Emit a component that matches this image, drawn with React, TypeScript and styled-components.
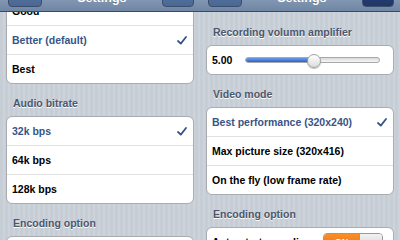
import styled, { createGlobalStyle } from "styled-components";

const GlobalStyle = createGlobalStyle`
  html, body {
    margin: 0;
    padding: 0;
    background: #c5ccd4;
  }
  body {
    font-family: "Liberation Sans", Helvetica, Arial, sans-serif;
  }
`;

type RowData = { label: string; checked?: boolean };

const qualityRows: RowData[] = [
  { label: "Good" },
  { label: "Better (default)", checked: true },
  { label: "Best" },
];

const bitrateRows: RowData[] = [
  { label: "32k bps", checked: true },
  { label: "64k bps" },
  { label: "128k bps" },
];

const videoRows: RowData[] = [
  { label: "Best performance (320x240)", checked: true },
  { label: "Max picture size (320x416)" },
  { label: "On the fly (low frame rate)" },
];

const Check = () => (
  <svg width="10" height="9" viewBox="0 0 10 9">
    <path
      d="M1 5 L3.8 7.6 L9 1"
      fill="none"
      stroke="#385487"
      strokeWidth="1.8"
      strokeLinecap="round"
      strokeLinejoin="round"
    />
  </svg>
);

const App = () => {
  return (
    <Screen>
      <GlobalStyle />

      <Panel>
        <NavBar>
          <NavButton>About</NavButton>
          <NavTitle>Settings</NavTitle>
          <NavButton>Done</NavButton>
        </NavBar>
        <Content offset={-16}>
          <Card>
            {qualityRows.map((r) => (
              <Row key={r.label}>
                <RowLabel selected={r.checked}>{r.label}</RowLabel>
                {r.checked && <Check />}
              </Row>
            ))}
          </Card>
          <GroupHeader>Audio bitrate</GroupHeader>
          <Card>
            {bitrateRows.map((r) => (
              <Row key={r.label}>
                <RowLabel selected={r.checked}>{r.label}</RowLabel>
                {r.checked && <Check />}
              </Row>
            ))}
          </Card>
          <GroupHeader>Encoding option</GroupHeader>
          <Card>
            <Row>
              <RowLabel>Auto-start encoding</RowLabel>
            </Row>
          </Card>
        </Content>
      </Panel>

      <Panel>
        <NavBar>
          <NavButton>About</NavButton>
          <NavTitle>Settings</NavTitle>
          <NavButton pressed>Done</NavButton>
        </NavBar>
        <Content offset={0}>
          <GroupHeader first>Recording volumn amplifier</GroupHeader>
          <Card>
            <Row>
              <RowLabel>5.00</RowLabel>
              <Track>
                <TrackFill style={{ width: "50%" }} />
                <Thumb style={{ left: "50%" }} />
              </Track>
            </Row>
          </Card>
          <GroupHeader>Video mode</GroupHeader>
          <Card>
            {videoRows.map((r) => (
              <Row key={r.label}>
                <RowLabel selected={r.checked}>{r.label}</RowLabel>
                {r.checked && <Check />}
              </Row>
            ))}
          </Card>
          <GroupHeader>Encoding option</GroupHeader>
          <Card>
            <Row toggle>
              <RowLabel>Auto-start encoding</RowLabel>
              <Toggle>
                <ToggleOn>ON</ToggleOn>
                <ToggleKnob />
              </Toggle>
            </Row>
          </Card>
        </Content>
      </Panel>
    </Screen>
  );
};

const Screen = styled.div`
  display: flex;
  width: 400px;
  height: 240px;
  overflow: hidden;
`;

const Panel = styled.div`
  width: 200px;
  height: 240px;
  overflow: hidden;
  display: flex;
  flex-direction: column;
  background: repeating-linear-gradient(
    90deg,
    #c6cdd5 0px,
    #c6cdd5 3px,
    #cdd3da 3px,
    #cdd3da 5px
  );
`;

const NavBar = styled.div`
  position: relative;
  z-index: 1;
  flex: none;
  height: 11px;
  padding: 0 6px 0 8px;
  display: flex;
  align-items: flex-end;
  justify-content: space-between;
  overflow: hidden;
  background: linear-gradient(#8196b2, #6f86a4);
  border-bottom: 1px solid #3b4a5e;
`;

const NavButton = styled.div<{ pressed?: boolean }>`
  height: 20px;
  margin-bottom: 4px;
  padding: 0 5px;
  min-width: 20px;
  display: flex;
  align-items: center;
  justify-content: center;
  border-radius: 4px;
  border: 1px solid #3a4d6b;
  background: ${(p) =>
    p.pressed
      ? "linear-gradient(#2c447a, #1f3668)"
      : "linear-gradient(#5b79a4, #4a6894)"};
  color: #fff;
  font-size: 7.5px;
  font-weight: bold;
  line-height: 10px;
`;

const NavTitle = styled.div`
  margin-bottom: 6px;
  color: #fff;
  font-size: 12.5px;
  font-weight: bold;
  line-height: 14px;
  text-shadow: 0 -1px 0 #4a5a70;
`;

const Content = styled.div<{ offset: number }>`
  margin-top: ${(p) => p.offset}px;
  padding: 0 6px;
  display: flex;
  flex-direction: column;
`;

const GroupHeader = styled.div<{ first?: boolean }>`
  margin: ${(p) => (p.first ? "14px" : "13px")} 0 7px 7px;
  line-height: 12px;
  font-size: 10.5px;
  font-weight: bold;
  color: #4c566c;
  text-shadow: 0 1px 0 #fff;
  white-space: nowrap;
`;

const Card = styled.div`
  flex: none;
  background: #fff;
  border: 1px solid #a9acb0;
  border-radius: 6px;
  overflow: hidden;
`;

const Row = styled.div<{ toggle?: boolean }>`
  height: 28px;
  padding: ${(p) => (p.toggle ? "0 10px 0 5px" : "0 6px 0 5px")};
  display: flex;
  align-items: center;
  justify-content: space-between;

  & + & {
    border-top: 1px solid #e0e0e0;
  }
`;

const RowLabel = styled.span<{ selected?: boolean }>`
  font-size: 10.5px;
  font-weight: bold;
  color: ${(p) => (p.selected ? "#385487" : "#000")};
  white-space: nowrap;
`;

const Track = styled.div`
  position: relative;
  flex: 1;
  height: 4px;
  margin: 0 7px 0 13px;
  border-radius: 3px;
  border: 1px solid #a8a8a8;
  background: linear-gradient(#d9d9d9, #f7f7f7);
`;

const TrackFill = styled.div`
  height: 100%;
  border-radius: 3px 0 0 3px;
  background: linear-gradient(#6f9de8, #2a63c8);
`;

const Thumb = styled.div`
  position: absolute;
  top: 50%;
  width: 12px;
  height: 12px;
  margin: -6px 0 0 -6px;
  border-radius: 50%;
  border: 1px solid #a0a0a0;
  background: linear-gradient(#ffffff, #dcdcdc);
  box-shadow: 0 1px 1px rgba(0, 0, 0, 0.25);
`;

const Toggle = styled.div`
  width: 58px;
  height: 17px;
  display: flex;
  border-radius: 4px;
  border: 1px solid #9a9a9a;
  overflow: hidden;
`;

const ToggleOn = styled.div`
  flex: 1;
  display: flex;
  align-items: center;
  justify-content: center;
  background: linear-gradient(#f98f2a, #f06d00);
  color: #fff;
  font-size: 9px;
  font-weight: bold;
`;

const ToggleKnob = styled.div`
  width: 22px;
  border-left: 1px solid #9a9a9a;
  background: linear-gradient(#f2f2f2, #cfcfcf);
`;

export default App;
